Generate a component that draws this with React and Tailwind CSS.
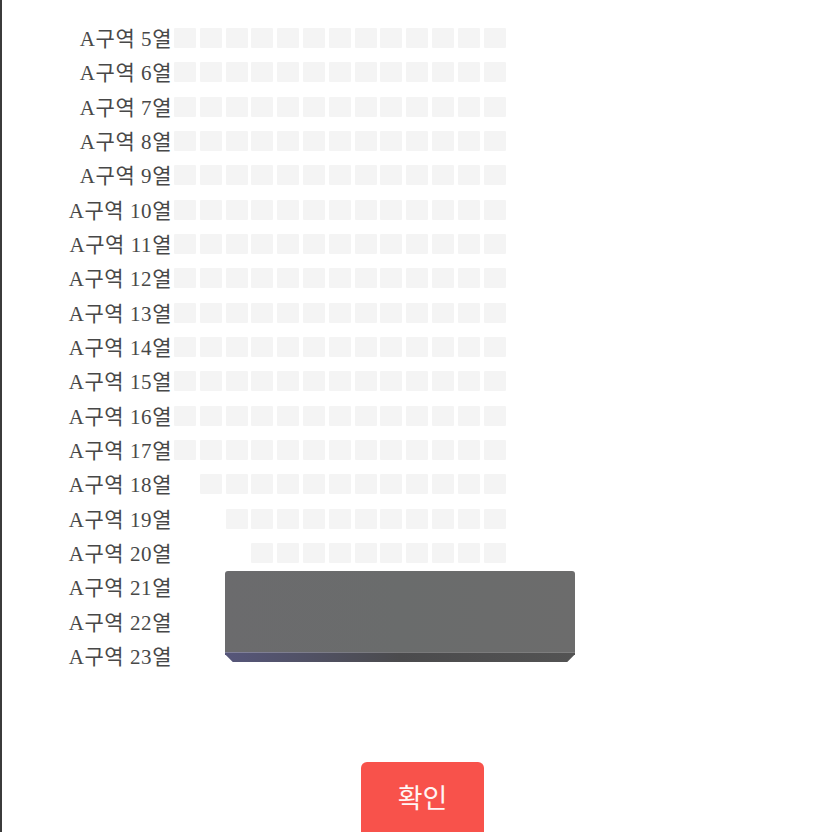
import React from 'react';

// Seat map for section A: rows 5–23, 13 seats per row.
// `skip` = how many seats at the start of the row are missing.
const rows = [
  { n: 5, skip: 0 },
  { n: 6, skip: 0 },
  { n: 7, skip: 0 },
  { n: 8, skip: 0 },
  { n: 9, skip: 0 },
  { n: 10, skip: 0 },
  { n: 11, skip: 0 },
  { n: 12, skip: 0 },
  { n: 13, skip: 0 },
  { n: 14, skip: 0 },
  { n: 15, skip: 0 },
  { n: 16, skip: 0 },
  { n: 17, skip: 0 },
  { n: 18, skip: 1 },
  { n: 19, skip: 2 },
  { n: 20, skip: 3 },
];

const stageRows = [21, 22, 23];

const labelFont = { fontFamily: '"Liberation Serif", "Noto Sans CJK KR", serif' };

const RowLabel = ({ n }) => (
  <div
    className="w-[172px] shrink-0 text-right text-[21px] leading-none text-[#484848] pt-[3px] tracking-[0.55px]"
    style={labelFont}
  >
    A구역 {n}열
  </div>
);

const SeatRow = ({ n, skip }) => (
  <div className="flex items-center h-[34.33px]">
    <RowLabel n={n} />
    <div className="flex gap-[3.8px] ml-[2px]">
      {Array.from({ length: 13 }).map((_, i) => (
        <div
          key={i}
          className={
            i < skip
              ? 'w-[22px] h-[20px] opacity-0'
              : 'w-[22px] h-[20px] bg-[#f4f4f4] rounded-[1px]'
          }
        />
      ))}
    </div>
  </div>
);

export default function App() {
  return (
    <div className="w-[832px] h-[832px] overflow-hidden bg-white border-l-2 border-[#3b3b3b] relative">
      <div className="pt-[21px] flex flex-col -ml-[2px]">
        {rows.map((r) => (
          <SeatRow key={r.n} n={r.n} skip={r.skip} />
        ))}

        {/* rows 21–23 sit beside the stage block */}
        <div className="flex">
          <div className="flex flex-col">
            {stageRows.map((n) => (
              <div key={n} className="flex items-center h-[34.33px]">
                <RowLabel n={n} />
              </div>
            ))}
          </div>
          <div className="ml-[53px] mt-[1px] w-[350px] h-[91px] flex flex-col">
            <div className="flex-1 rounded-t-[3px] bg-gradient-to-r from-[#6b6b6d] via-[#6a6c6c] to-[#6c6c6c]" />
            <div className="h-[10px] bg-gradient-to-r from-[#56567a] via-[#4b4b4d] to-[#535353] [clip-path:polygon(0_0,100%_0,100%_20%,calc(100%-8px)_100%,8px_100%,0_20%)]" />
          </div>
        </div>
      </div>

      <div className="flex justify-center mt-[89px] -ml-[2px]">
        <button
          className="ml-[13px] w-[123px] h-[80px] bg-[#f8524b] rounded-[6px] text-[#fff5f4] text-[27px] flex justify-center pt-[15px]"
          style={{ fontFamily: '"Noto Sans CJK KR", sans-serif' }}
        >
          확인
        </button>
      </div>
    </div>
  );
}
